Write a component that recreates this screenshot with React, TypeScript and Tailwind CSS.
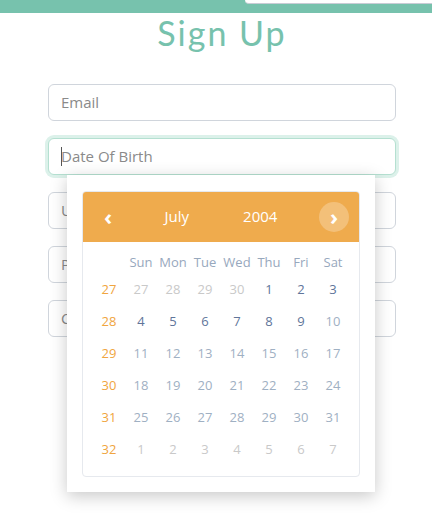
import React from "react";

type Cell = { n: number; kind: "other" | "dark" | "light" };

const dayNames = ["Sun", "Mon", "Tue", "Wed", "Thu", "Fri", "Sat"];

const weeks: { week: number; days: Cell[] }[] = [
  {
    week: 27,
    days: [
      { n: 27, kind: "other" },
      { n: 28, kind: "other" },
      { n: 29, kind: "other" },
      { n: 30, kind: "other" },
      { n: 1, kind: "dark" },
      { n: 2, kind: "dark" },
      { n: 3, kind: "dark" },
    ],
  },
  {
    week: 28,
    days: [4, 5, 6, 7, 8, 9].map((n) => ({ n, kind: "dark" as const })).concat([{ n: 10, kind: "light" }]),
  },
  { week: 29, days: [11, 12, 13, 14, 15, 16, 17].map((n) => ({ n, kind: "light" as const })) },
  { week: 30, days: [18, 19, 20, 21, 22, 23, 24].map((n) => ({ n, kind: "light" as const })) },
  { week: 31, days: [25, 26, 27, 28, 29, 30, 31].map((n) => ({ n, kind: "light" as const })) },
  { week: 32, days: [1, 2, 3, 4, 5, 6, 7].map((n) => ({ n, kind: "other" as const })) },
];

const dayColor = {
  other: "text-[#c9c9c9]",
  dark: "text-[#60759a]",
  light: "text-[#9fb0c3]",
};

function Field({ label }: { label: string }) {
  return (
    <div className="h-[37px] rounded-[6px] border border-[#d0d5dc] bg-white px-[12px] flex items-center text-[15px] text-[#8a8a8a]">
      {label}
    </div>
  );
}

function Calendar() {
  return (
    <div className="absolute left-[19px] top-[37px] z-10 w-[308px] bg-white p-[15px] pt-[16px] shadow-[0_4px_16px_rgba(0,0,0,0.22)]">
      <div className="rounded-[4px] border border-[#e6e9ee] overflow-hidden">
        <div className="h-[50px] bg-[#efab4d] px-[10px] flex items-center text-white text-[15px]">
          <button className="w-[30px] h-[30px] rounded-full flex items-center justify-center text-[22px] font-bold leading-none pb-[3px]">
            ‹
          </button>
          <div className="flex-1 flex justify-center gap-[54px] pb-[1px]">
            <span>July</span>
            <span>2004</span>
          </div>
          <button className="w-[30px] h-[30px] rounded-full bg-white/25 flex items-center justify-center text-[22px] font-bold leading-none pb-[3px]">
            ›
          </button>
        </div>
        <div className="px-[10px] pt-[10px] pb-[10px] text-[13px]">
          <div className="grid grid-cols-8">
            <div className="h-[22px]" />
            {dayNames.map((d) => (
              <div key={d} className="h-[22px] flex items-center justify-center text-[#97a8bd]">
                {d}
              </div>
            ))}
          </div>
          {weeks.map((w) => (
            <div key={w.week} className="grid grid-cols-8">
              <div className="h-[32px] flex items-center justify-center text-[#f0a540]">{w.week}</div>
              {w.days.map((c, i) => (
                <div key={i} className={`h-[32px] flex items-center justify-center ${dayColor[c.kind]}`}>
                  {c.n}
                </div>
              ))}
            </div>
          ))}
        </div>
      </div>
    </div>
  );
}

export default function App() {
  return (
    <div className="w-[432px] h-[518px] bg-white overflow-hidden font-['Open_Sans',sans-serif]">
      <div className="relative h-[13px] bg-[#77c2ad]">
        <div className="absolute right-0 top-0 w-[187px] h-[4px] bg-white rounded-bl-[6px] border-b border-[#c9ccd6]" />
      </div>
      <h1 className="pl-[12px] text-center text-[34px] leading-[40px] text-[#77c2ad] font-['Lato',sans-serif] tracking-[2px]">
        Sign Up
      </h1>
      <div className="mt-[31px] px-[48px] pr-[36px] flex flex-col gap-[17px]">
        <Field label="Email" />
        <div className="relative">
          <div className="h-[37px] rounded-[6px] border border-[#b5e0d1] bg-white px-[12px] flex items-center text-[15px] text-[#8a8a8a] ring-[3px] ring-[#dcf1ea]">
            <span className="w-px h-[19px] bg-[#555] -mr-px" />
            Date Of Birth
          </div>
          <Calendar />
        </div>
        <Field label="Username" />
        <Field label="Password" />
        <Field label="Confirm Password" />
      </div>
    </div>
  );
}
